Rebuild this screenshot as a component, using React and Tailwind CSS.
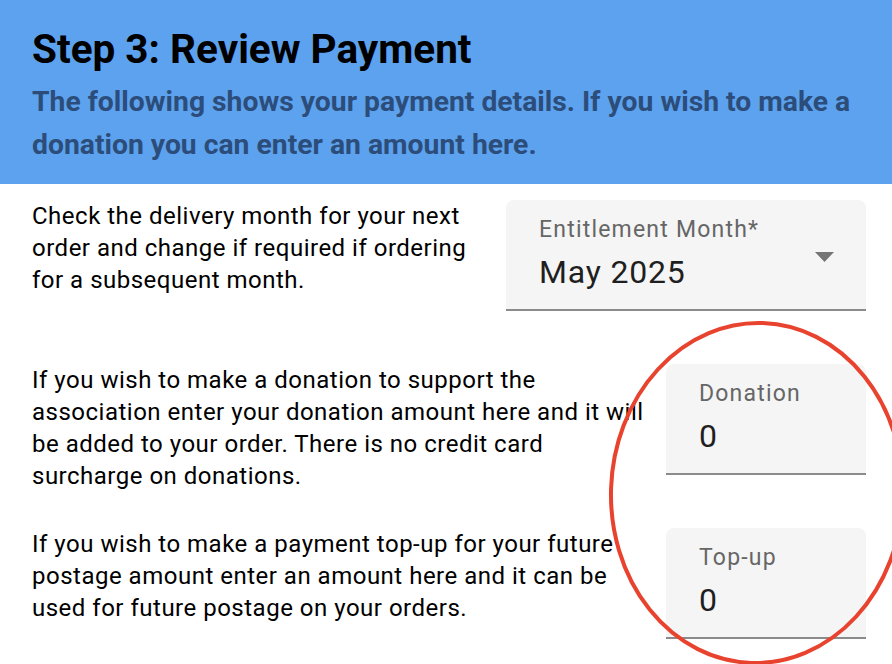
function Field({ label, value, width, children }) {
  return (
    <div className={`relative ${width} h-[111px] shrink-0 bg-[#f5f5f5] rounded-t-lg border-b-2 border-[#8b8b8b] flex flex-col pt-[16px] pl-[33px]`}>
      <span className="text-[23px] leading-7 tracking-[1.2px] text-[#666666]">{label}</span>
      <span className="mt-2 text-[32px] leading-10 tracking-[0.8px] text-[#1f1f1f]">{value}</span>
      {children}
    </div>
  );
}

export default function App() {
  return (
    <div className="relative w-[892px] h-[664px] overflow-hidden bg-white font-['Roboto',sans-serif]">
      <div className="bg-[#5ca2ee] h-[184px] pl-8 pr-4 pt-[25px]">
        <h1 className="text-[40.5px] font-bold leading-[48px] text-black">Step 3: Review Payment</h1>
        <p className="text-[28.3px] font-bold leading-[43px] text-[#2c4d7a] mt-[7px]">
          The following shows your payment details. If you wish to make a donation you can enter an amount here.
        </p>
      </div>

      <div className="flex flex-col pl-8 pr-[26px] pt-4">
        <div className="flex items-start justify-between h-[164px]">
          <p className="w-[450px] text-[24px] leading-8 tracking-[0.5px] text-black">
            Check the delivery month for your next order and change if required if ordering for a subsequent month.
          </p>
          <Field label="Entitlement Month*" value="May 2025" width="w-[360px]">
            <svg className="absolute right-[32px] top-[52px]" width="19" height="10" viewBox="0 0 19 10">
              <path d="M0 0 L19 0 L9.5 10 Z" fill="#757575" />
            </svg>
          </Field>
        </div>

        <div className="flex items-start justify-between h-[164px]">
          <p className="w-[616px] text-[24px] leading-8 tracking-[0.5px] text-black">
            If you wish to make a donation to support the association enter your donation amount here and it will be added to your order. There is no credit card surcharge on donations.
          </p>
          <Field label="Donation" value="0" width="w-[200px]" />
        </div>

        <div className="flex items-start justify-between h-[164px]">
          <p className="w-[616px] text-[24px] leading-8 tracking-[0.5px] text-black">
            If you wish to make a payment top-up for your future postage amount enter an amount here and it can be used for future postage on your orders.
          </p>
          <Field label="Top-up" value="0" width="w-[200px]" />
        </div>
      </div>

      <svg className="absolute left-0 top-0 pointer-events-none" width="892" height="664" viewBox="0 0 892 664">
        <ellipse cx="757" cy="493" rx="146" ry="170" fill="none" stroke="#e8432e" strokeWidth="4" transform="rotate(2 757 493)" />
      </svg>
    </div>
  );
}
